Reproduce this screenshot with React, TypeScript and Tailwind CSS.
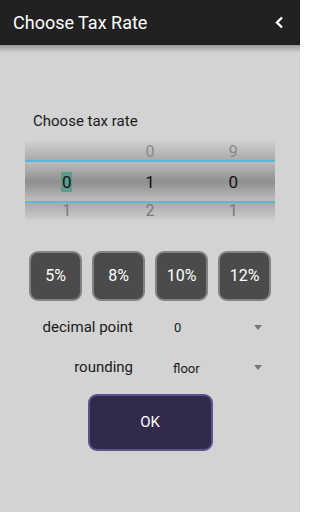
import React from "react";

const rates = ["5%", "8%", "10%", "12%"];

const columns = [
  { top: "", mid: "0", bottom: "1", active: true },
  { top: "0", mid: "1", bottom: "2", active: false },
  { top: "9", mid: "0", bottom: "1", active: false },
];

function Caret() {
  return (
    <svg width="8" height="5" viewBox="0 0 8 5">
      <polygon points="0,0 8,0 4,5" fill="#777777" />
    </svg>
  );
}

export default function App() {
  return (
    <div
      className="w-[300px] h-[512px] bg-[#d3d3d3] flex flex-col"
      style={{ fontFamily: "Roboto, 'Noto Sans', sans-serif" }}
    >
      {/* Header */}
      <div className="h-[45px] bg-[#212121] flex items-center justify-between pl-[13px] pr-[16px]">
        <span className="text-white text-[18px]">Choose Tax Rate</span>
        <svg width="9" height="13" viewBox="0 0 9 13">
          <polyline points="7,1.5 2,6.5 7,11.5" fill="none" stroke="#ffffff" strokeWidth="2.4" />
        </svg>
      </div>
      <div className="h-[8px] bg-gradient-to-b from-[#9c9c9c] to-[#d3d3d3]" />

      <div className="pt-[59px] pl-[33px] text-[15px] text-[#1a1a1a] leading-[18px]">Choose tax rate</div>

      {/* Picker */}
      <div className="mx-[25px] mt-[11px] h-[79px] flex flex-col">
        <div className="h-[19px] bg-gradient-to-b from-[#d0d0d0] to-[#aaaaaa] grid grid-cols-3 text-[16px] text-[#8a8a8a] leading-none items-end">
          {columns.map((c, i) => (
            <span key={i} className="text-center">{c.top}</span>
          ))}
        </div>
        <div className="h-[2px] bg-[#5bb8d8]" />
        <div className="h-[39px] bg-[linear-gradient(to_bottom,#bdbdbd,#8f8f8f_50%,#bdbdbd)] grid grid-cols-3 items-center text-[17px] text-[#111111]">
          {columns.map((c, i) => (
            <div key={i} className="flex justify-center">
              <span className={c.active ? "bg-[#5f9a90] px-[1px] leading-[20px]" : "leading-[20px]"}>{c.mid}</span>
            </div>
          ))}
        </div>
        <div className="h-[2px] bg-[#5bb8d8]" />
        <div className="h-[17px] bg-gradient-to-b from-[#a9a9a9] to-[#cdcdcd] grid grid-cols-3 text-[16px] text-[#7a7a7a] leading-[16px]">
          {columns.map((c, i) => (
            <span key={i} className="text-center">{c.bottom}</span>
          ))}
        </div>
      </div>

      {/* Rate buttons */}
      <div className="mt-[31px] pl-[29px] flex gap-[10px]">
        {rates.map((r) => (
          <button
            key={r}
            className="w-[53px] h-[50px] rounded-[9px] bg-[#4b4b4b] border-2 border-[#828282] text-white text-[16px]"
          >
            {r}
          </button>
        ))}
      </div>

      {/* Decimal point */}
      <div className="mt-[15px] h-[22px] flex items-center">
        <span className="w-[133px] text-right text-[15px] text-[#1a1a1a]">decimal point</span>
        <span className="ml-[41px] text-[13px] text-[#1a1a1a] mt-[2px] flex-1">0</span>
        <span className="mr-[38px]"><Caret /></span>
      </div>

      {/* Rounding */}
      <div className="mt-[18px] h-[22px] flex items-center">
        <span className="w-[133px] text-right text-[15px] text-[#1a1a1a]">rounding</span>
        <span className="ml-[40px] text-[13px] text-[#1a1a1a] mt-[3px] flex-1">floor</span>
        <span className="mr-[38px]"><Caret /></span>
      </div>

      <div className="mt-[16px] flex justify-center">
        <button className="w-[125px] h-[57px] rounded-[9px] bg-[#312a4a] border-2 border-[#5b5290] text-white text-[15px]">
          OK
        </button>
      </div>
    </div>
  );
}
